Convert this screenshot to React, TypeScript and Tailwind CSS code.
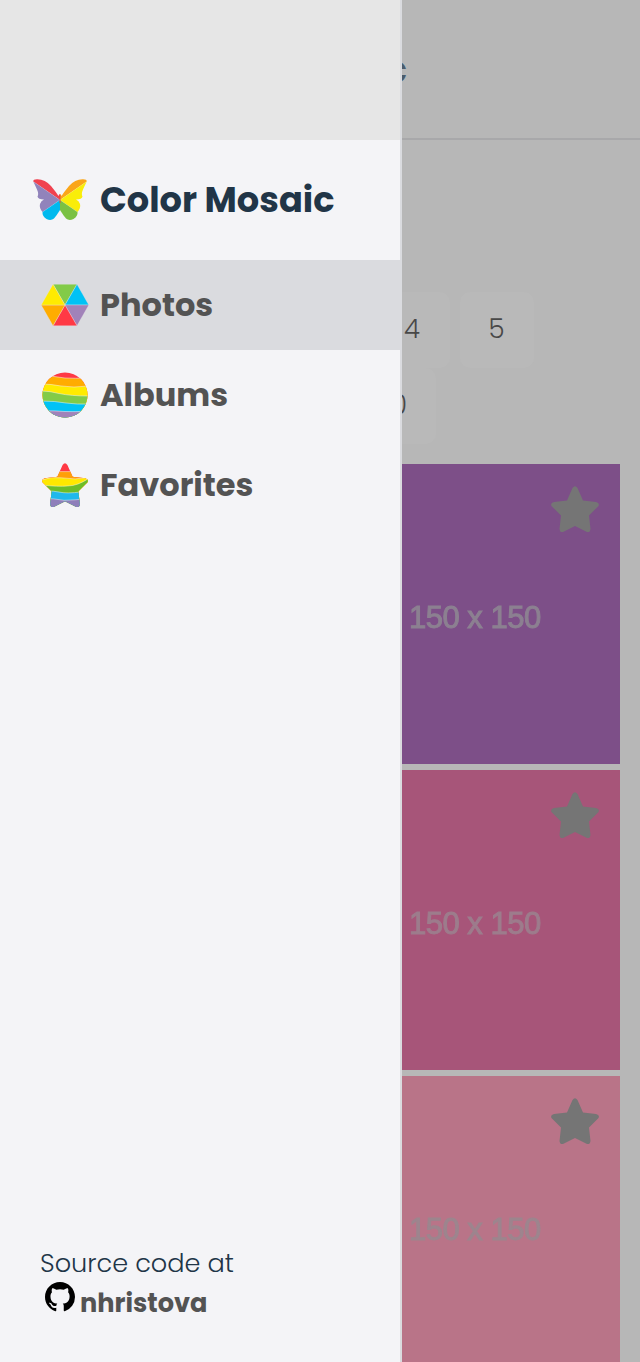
const heading = "font-['Poppins','Inter',sans-serif] font-bold whitespace-nowrap";

function WingOutlines({ upper, middle, lower }: { upper: string; middle: string; lower: string }) {
  return (
    <>
      <path d="M0.300 2.500Q0 0.300 4 0.200Q12 0 18 7Q23 13 25.500 17Q26 15 27 15V21Z" fill={upper} />
      <path d="M0.300 2.500L27 21L9.500 33Q6 29 7 25Q8 21.500 11 20.500Q5 20.500 4.500 17.500Q6 15 4 10.500Q2 6 0.300 2.500Z" fill={middle} />
      <path d="M9.500 33L27 21V31Q24 36 21 39.500Q18 42 13.500 40Q9 37 9.500 33Z" fill={lower} />
    </>
  );
}

function Butterfly() {
  return (
    <svg width="54" height="42" viewBox="0 0 54 42" className="shrink-0">
      <WingOutlines upper="#f0414f" middle="#9183bb" lower="#00b9ee" />
      <g transform="translate(54 0) scale(-1 1)">
        <WingOutlines upper="#faa61a" middle="#f9ed0a" lower="#7ac143" />
      </g>
      <path d="M1 3L27 21L44.500 33M53 3L27 21L9.500 33" stroke="#fff" strokeOpacity=".35" strokeWidth=".3" fill="none" />
      <path d="M27 16V24" stroke="#e2503c" strokeWidth="1" />
    </svg>
  );
}

function Hexagon() {
  return (
    <svg width="48" height="42" viewBox="0 0 48 42" stroke="#e8e6e8" strokeWidth=".35" className="shrink-0">
      <path d="M12 0.200H36L24 21Z" fill="#82cb48" />
      <path d="M36 0.200L47.800 21H24Z" fill="#00c2f5" />
      <path d="M47.800 21L36 41.800L24 21Z" fill="#a182b9" />
      <path d="M36 41.800H12L24 21Z" fill="#ff3945" />
      <path d="M12 41.800L0.200 21H24Z" fill="#ffac00" />
      <path d="M0.200 21L12 0.200L24 21Z" fill="#ffeb00" />
    </svg>
  );
}

function Globe() {
  return (
    <svg width="46" height="46" viewBox="0 0 46 46" className="shrink-0">
      <clipPath id="disc"><circle cx="23" cy="23" r="22.500" /></clipPath>
      <g clipPath="url(#disc)" stroke="#f4f4f7" strokeWidth=".5">
        <path d="M-1-1H47V47H-1Z" fill="#ff3945" />
        <path d="M-1 4Q13 4 23 6Q32 6.500 47 6V47H-1Z" fill="#ffac00" />
        <path d="M-1 12Q9 12 19 14Q31 16 47 14V47H-1Z" fill="#ffeb00" />
        <path d="M-1 19Q8 19 17 21.500Q29 24 47 24V47H-1Z" fill="#82cb48" />
        <path d="M-1 29Q13 29 24 31Q35 32.500 47 32V47H-1Z" fill="#00c2f5" />
        <path d="M-1 39Q13 38.500 23 39.500Q33 40 47 39V47H-1Z" fill="#a182b9" />
      </g>
    </svg>
  );
}

const starPath = "M21.500 2Q24 -1.500 26.500 2L32 14.500L45 16Q49 17 47.500 20L38 29.500L39.500 43Q39 47 36 46L24 40L12 46Q9 47 8.500 43L10 29.500L0.500 20Q-1 17 3 16L16 14.500Z";

function RainbowStar() {
  return (
    <svg width="46" height="44" viewBox="0 0 48 46" className="shrink-0">
      <clipPath id="rainbow-star"><path d={starPath} /></clipPath>
      <g clipPath="url(#rainbow-star)" stroke="#f4f4f7" strokeWidth=".5">
        <path d="M-1-1H49V47H-1Z" fill="#ff3945" />
        <path d="M-1 9H49V47H-1Z" fill="#ff9f08" />
        <path d="M-1 18Q9 14 20 15.500Q35 18 49 15V47H-1Z" fill="#ffe800" />
        <path d="M-1 23Q17 25 27 24Q37 24 49 16V47H-1Z" fill="#6dbd28" />
        <path d="M-1 29Q13 29 22 31Q32 32 49 29V47H-1Z" fill="#20b8ec" />
        <path d="M-1 37Q13 37 23 39Q33 39 49 37V47H-1Z" fill="#8f7fba" />
      </g>
    </svg>
  );
}

function GitHubMark() {
  return (
    <svg width="30" height="30" viewBox="0 0 16 16" className="shrink-0">
      <path d="M8 0C3.580 0 0 3.580 0 8c0 3.540 2.290 6.530 5.470 7.590.4.070.55-.17.55-.38 0-.19-.01-.82-.01-1.490-2.010.37-2.530-.49-2.690-.94-.09-.23-.48-.94-.82-1.130-.28-.15-.68-.52-.01-.53.63-.01 1.080.58 1.230.82.72 1.210 1.870.87 2.330.66.070-.52.28-.87.51-1.070-1.780-.2-3.640-.89-3.640-3.950 0-.87.31-1.590.82-2.150-.08-.2-.36-1.020.08-2.120 0 0 .67-.21 2.200.82.64-.18 1.320-.27 2-.27s1.360.09 2 .27c1.530-1.040 2.200-.82 2.200-.82.44 1.100.16 1.920.08 2.120.51.56.82 1.270.82 2.150 0 3.070-1.870 3.750-3.650 3.950.29.25.54.73.54 1.480 0 1.070-.01 1.930-.01 2.200 0 .21.15.46.55.38A8.010 8.010 0 0 0 16 8c0-4.420-3.580-8-8-8z" />
    </svg>
  );
}

const links = [
  { label: "Photos", Icon: Hexagon, row: "bg-[#dadbdf]" },
  { label: "Albums", Icon: Globe, row: "" },
  { label: "Favorites", Icon: RainbowStar, row: "" },
];

function Drawer() {
  return (
    <aside className="flex w-[402px] shrink-0 flex-col border-r-2 border-[#dadbdf] bg-[#f4f4f7]">
      <div className="h-[140px] shrink-0 bg-[#e6e6e6]" />
      <div className="flex h-[120px] shrink-0 items-center pl-[33px]">
        <Butterfly />
        <span className={`${heading} ml-[13px] text-[35.200px] leading-none text-[#213547]`}>Color Mosaic</span>
      </div>
      <nav>
        {links.map(({ label, Icon, row }) => (
          <a key={label} className={`flex h-[90px] items-center pl-10 ${row}`}>
            <span className="flex w-[50px] justify-center"><Icon /></span>
            <span className={`${heading} ml-2.5 text-[32px] leading-none text-[#535353]`}>{label}</span>
          </a>
        ))}
      </nav>
      <footer className="mt-auto h-[119px] pl-10 font-['Poppins','Inter',sans-serif]">
        <p className="h-[39px] text-[25.600px] leading-10 font-light whitespace-nowrap text-[#213547]">Source code at</p>
        <div className="flex pl-[5px]">
          <GitHubMark />
          <span className={`${heading} ml-[5px] text-[25.600px] leading-[42px] text-[#535353]`}>nhristova</span>
        </div>
      </footer>
    </aside>
  );
}

function Tile({ color, ink }: { color: string; ink: string }) {
  return (
    <div className={`flex h-[300px] w-[218px] shrink-0 flex-col ${color}`}>
      <div className="flex h-[138px] justify-end pt-[22px] pr-[21px]">
        <svg width="48" height="46" viewBox="0 0 48 46" className="fill-[#757575]"><path d={starPath} /></svg>
      </div>
      <p className={`pl-[7px] font-['Liberation_Sans',sans-serif] text-[31px] leading-[31px] tracking-[-0.5px] whitespace-nowrap blur-[0.5px] [-webkit-text-stroke:1px] ${ink}`}>150 x 150</p>
    </div>
  );
}

function Gallery() {
  return (
    <main className="flex min-w-0 flex-1 flex-col overflow-hidden bg-[#b7b7b7] font-['Poppins','Inter',sans-serif]">
      <header className="flex h-[140px] shrink-0 items-center border-b-2 border-[#a8a8aa] pt-[3px]">
        <div className="flex w-[5px] justify-end overflow-hidden text-[38.400px] leading-none font-bold text-[#4b5b6b]">c</div>
      </header>
      <div className="flex h-[324px] shrink-0 flex-col pt-[152px] text-[26px] font-light text-[#484848]">
        <div className="flex h-[76px] gap-2.5">
          <span className="w-[48px] rounded-r-[10px] bg-[#b9b9b9] pl-[2px] leading-[75px]">4</span>
          <span className="w-[74px] rounded-[10px] bg-[#b9b9b9] pr-px text-center leading-[75px]">5</span>
        </div>
        <div className="flex h-[76px] w-[34px] justify-start overflow-hidden rounded-r-[10px] bg-[#b9b9b9]">
          <span className="flex w-[5px] justify-end overflow-hidden leading-[74px]">0</span>
        </div>
      </div>
      <div className="flex flex-col gap-1.5">
        <Tile color="bg-[#7d4f88]" ink="text-[#8c8091]" />
        <Tile color="bg-[#a75579]" ink="text-[#9d7c8c]" />
        <Tile color="bg-[#b97488]" ink="text-[#9d858e]" />
      </div>
    </main>
  );
}

export default function App() {
  return (
    <div className="flex h-[1362px] w-[640px] overflow-hidden">
      <Drawer />
      <Gallery />
    </div>
  );
}
